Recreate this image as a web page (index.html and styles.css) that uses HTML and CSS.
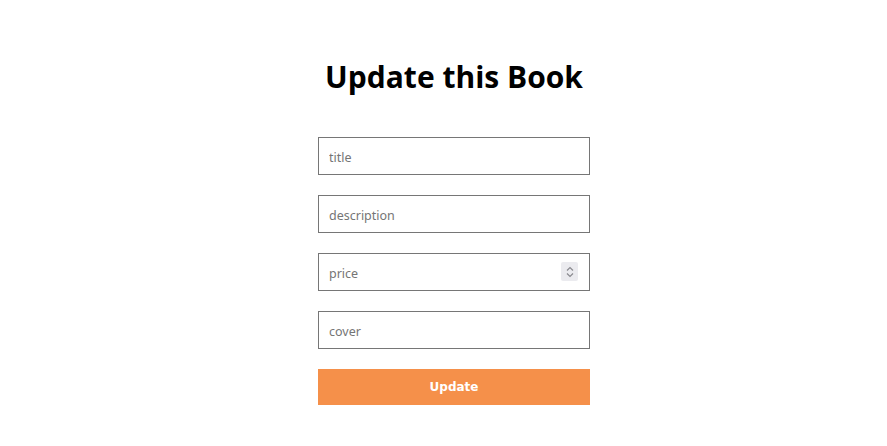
FILE: index.html
```html
<!DOCTYPE html>
<html>
<head>
<meta charset="utf-8">
<link rel="stylesheet" href="styles.css">
</head>
<body>
<div class="page">
  <h1 class="heading">Update this Book</h1>
  <form class="form">
    <input class="field" type="text" placeholder="title">
    <input class="field" type="text" placeholder="description">
    <div class="num-wrap">
      <input class="field num" type="number" placeholder="price">
      <span class="spin">
        <svg width="10" height="14" viewBox="0 0 10 14">
          <path d="M2 5.5 L5 2.5 L8 5.5" fill="none" stroke="#8a8a8f" stroke-width="1.2"/>
          <path d="M2 8.5 L5 11.5 L8 8.5" fill="none" stroke="#8a8a8f" stroke-width="1.2"/>
        </svg>
      </span>
    </div>
    <input class="field" type="text" placeholder="cover">
    <button class="btn" type="button">Update</button>
  </form>
</div>
</body>
</html>
```

FILE: styles.css
```css
html, body {
  margin: 0;
  padding: 0;
  background: #fff;
}
.page {
  display: flex;
  flex-direction: column;
  align-items: center;
  padding-left: 21px;
  padding-top: 55px;
}
.heading {
  margin: 0;
  font-family: "Open Sans", sans-serif;
  font-weight: 700;
  font-size: 30px;
  line-height: 44px;
  color: #000;
}
.form {
  margin-top: 38px;
  display: flex;
  flex-direction: column;
  gap: 20px;
  width: 272px;
}
.field {
  box-sizing: border-box;
  width: 272px;
  height: 38px;
  margin: 0;
  padding: 2px 10px 0;
  border: 1px solid #767676;
  border-radius: 0;
  font-family: "Noto Sans", sans-serif;
  font-size: 12.5px;
  color: #000;
  background: #fff;
  outline: none;
}
.field::placeholder {
  color: #757575;
}
.num {
  appearance: textfield;
  -moz-appearance: textfield;
}
.num::-webkit-inner-spin-button,
.num::-webkit-outer-spin-button {
  -webkit-appearance: none;
  margin: 0;
}
.num-wrap {
  position: relative;
  width: 272px;
  height: 38px;
}
.spin {
  position: absolute;
  left: 243px;
  top: 9px;
  width: 17px;
  height: 19px;
  background: #ebebef;
  border-radius: 2px;
  display: flex;
  align-items: center;
  justify-content: center;
}
.btn {
  height: 36px;
  width: 272px;
  margin: 0;
  border: none;
  background: #f5904a;
  color: #fff;
  font-family: "DejaVu Sans", sans-serif;
  font-weight: 700;
  font-size: 12px;
}
```
